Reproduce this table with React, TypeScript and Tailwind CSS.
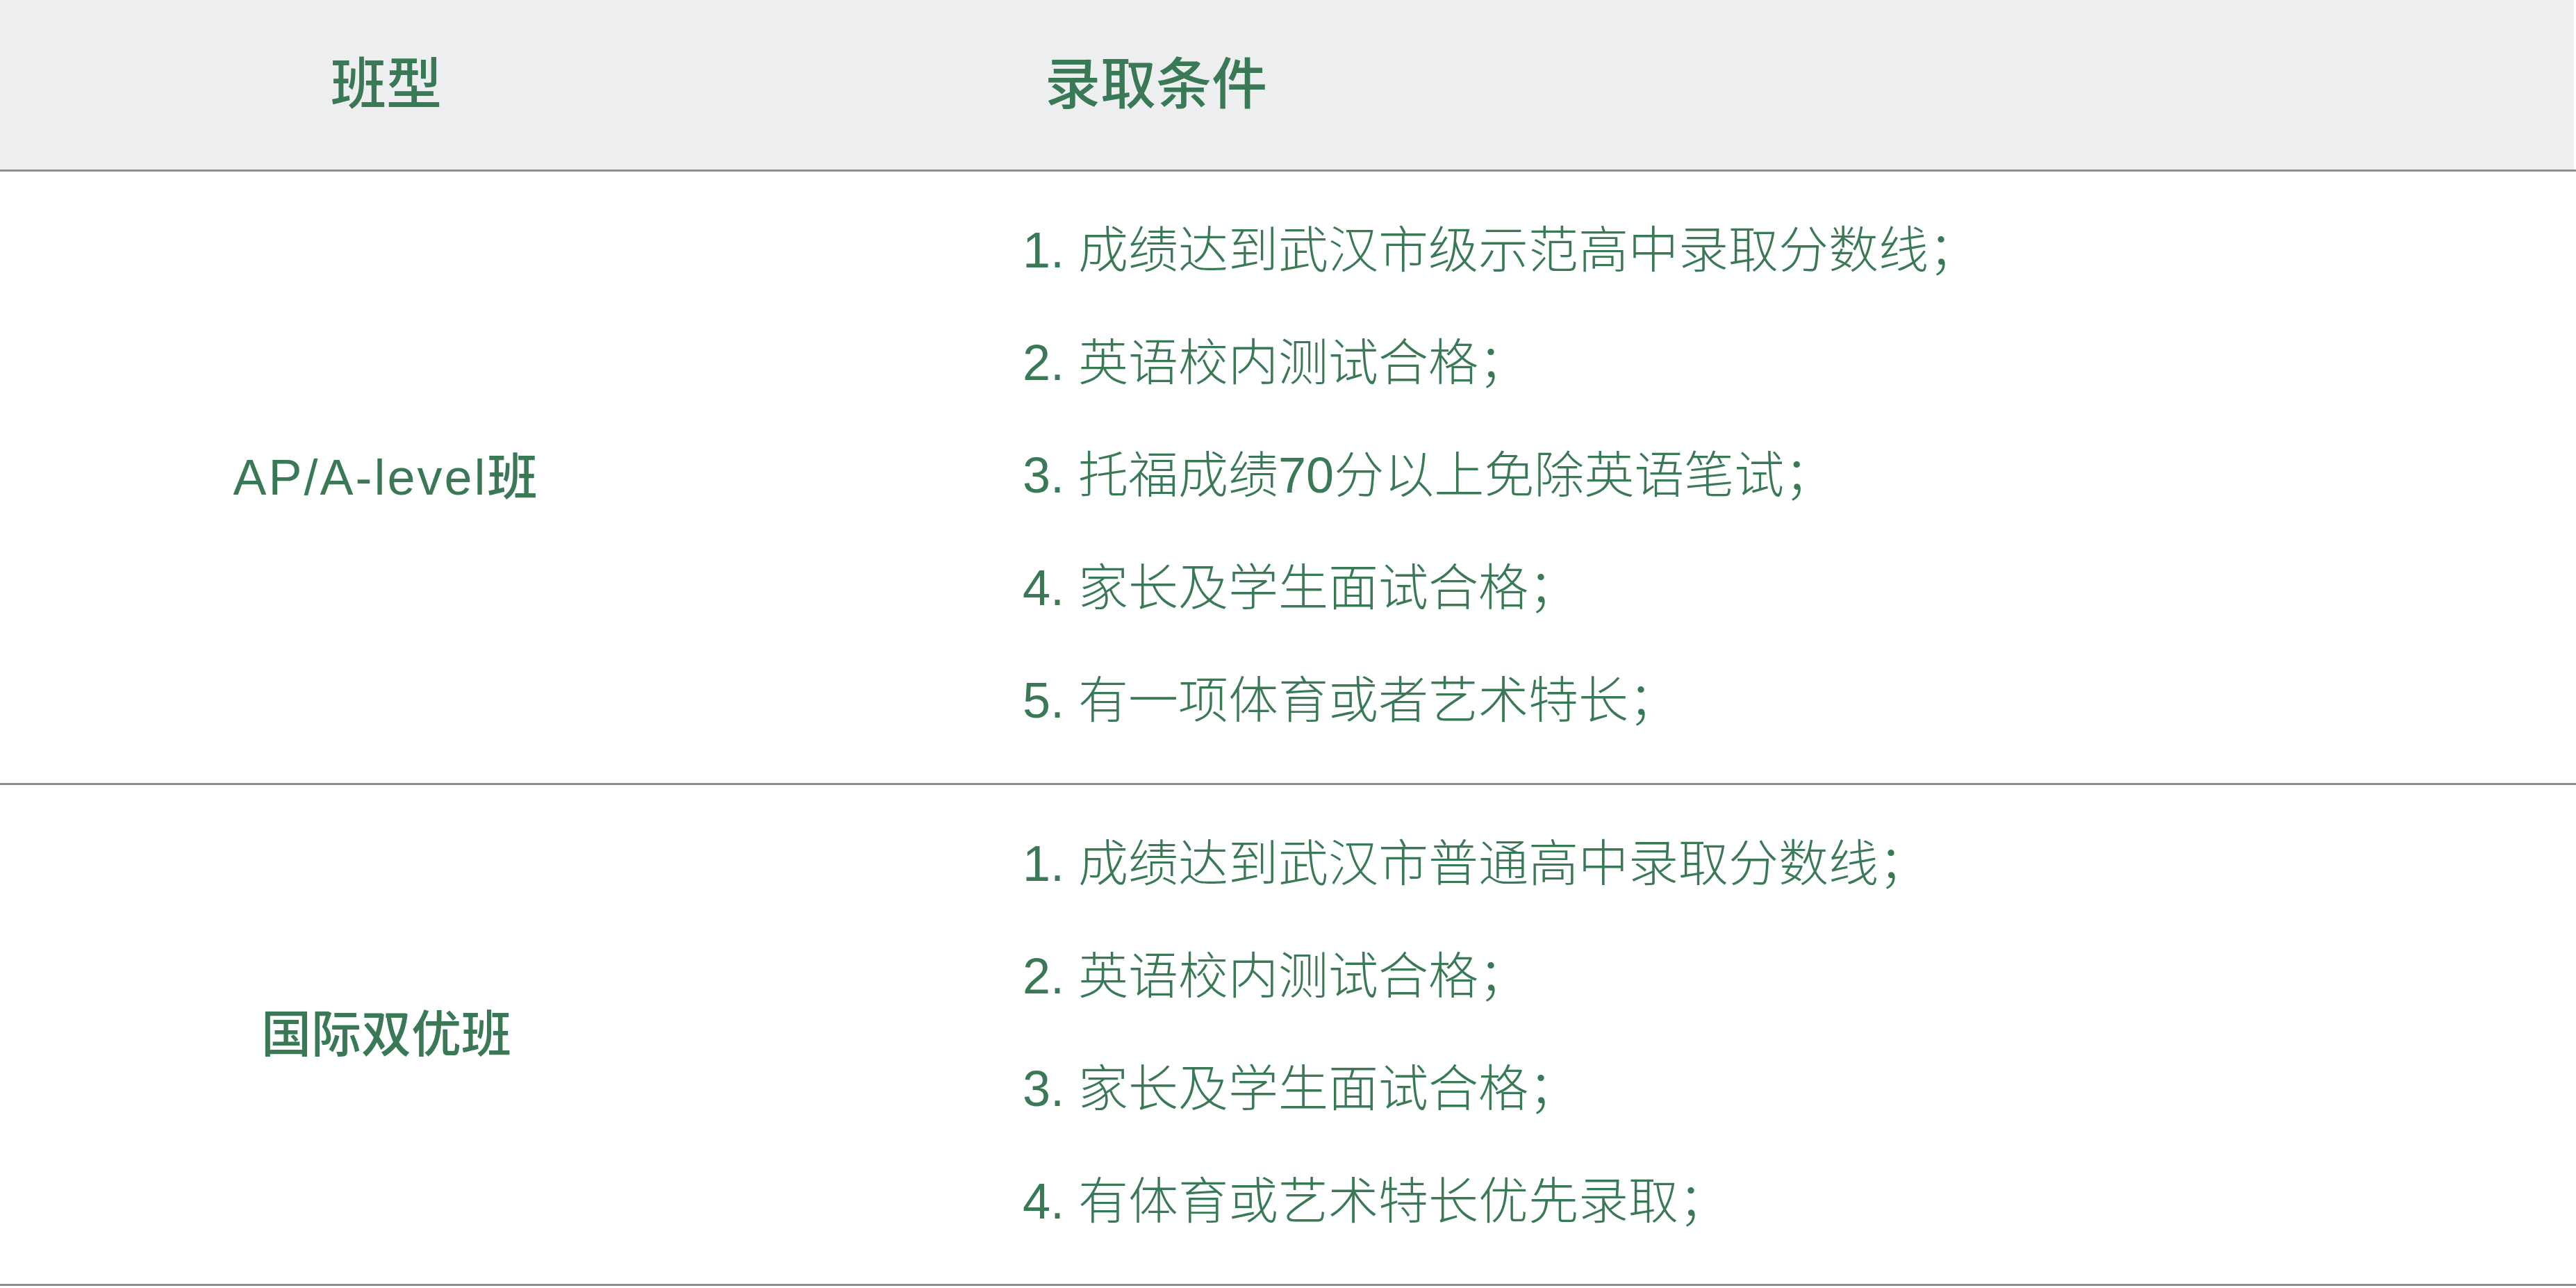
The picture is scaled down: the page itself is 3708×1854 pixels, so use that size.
const rows = [
  {
    name: "AP/A-level班",
    track: "tracking-[3px]",
    items: [
      "1. 成绩达到武汉市级示范高中录取分数线；",
      "2. 英语校内测试合格；",
      "3. 托福成绩70分以上免除英语笔试；",
      "4. 家长及学生面试合格；",
      "5. 有一项体育或者艺术特长；",
    ],
  },
  {
    name: "国际双优班",
    track: "",
    items: [
      "1. 成绩达到武汉市普通高中录取分数线；",
      "2. 英语校内测试合格；",
      "3. 家长及学生面试合格；",
      "4. 有体育或艺术特长优先录取；",
    ],
  },
];

export default function App() {
  return (
    <div className="w-[3708px] h-[1854px] bg-white text-[#3a7955] font-['Liberation_Sans','Noto_Sans_CJK_SC',sans-serif]">
      <div className="border-b-[3px] border-[#8e8e8e]">
        <div className="mr-[3px] h-[244px] bg-[#edeef0] flex items-center text-[80px] font-medium">
          <div className="w-[1112px] text-center">班型</div>
          <div className="pl-[392px]">录取条件</div>
        </div>
      </div>

      {rows.map((r) => (
        <div key={r.name} className="flex border-b-[3px] border-[#8e8e8e]">
          <div className={`w-[1112px] flex items-center justify-center text-[72px] font-medium ${r.track}`}>{r.name}</div>
          <div className="pl-[360px] pt-[32px] pb-[38px] text-[72px] leading-[162px] font-light">
            {r.items.map((t) => (
              <div key={t}>{t}</div>
            ))}
          </div>
        </div>
      ))}
    </div>
  );
}
